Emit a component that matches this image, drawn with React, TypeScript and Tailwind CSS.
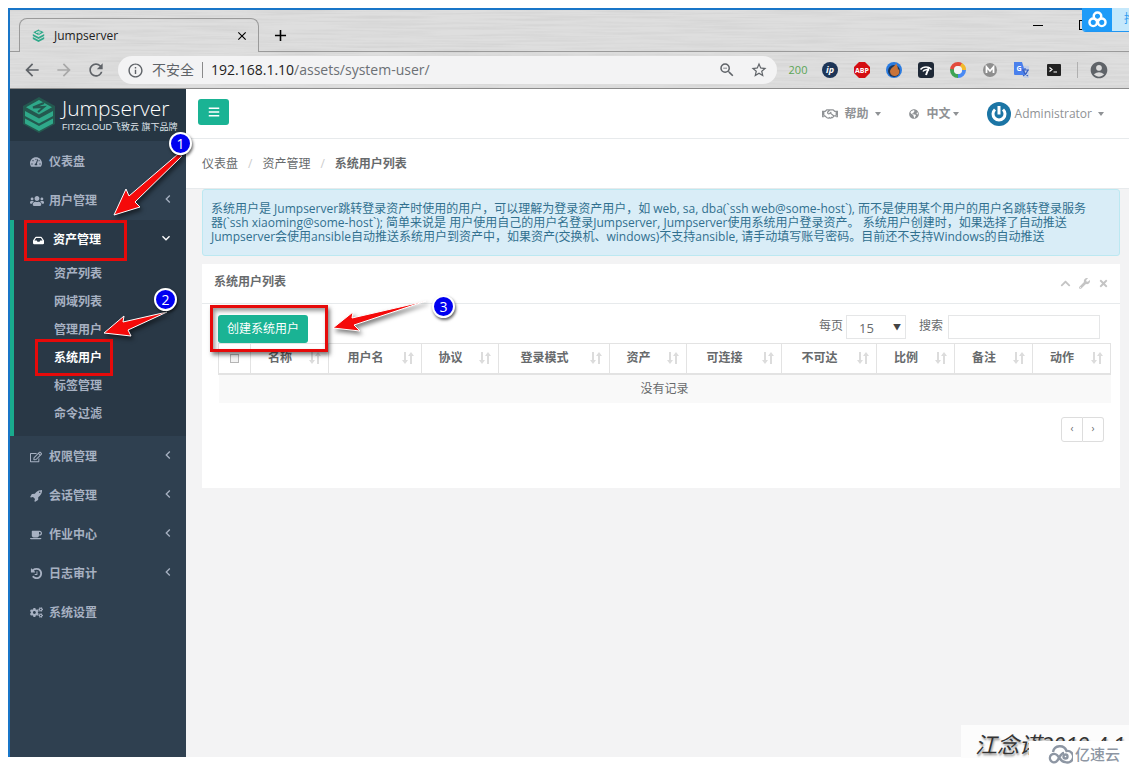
import type { ReactNode } from "react";
import {
  FaBars,
  FaChevronUp,
  FaCoffee,
  FaCogs,
  FaGlobeAmericas,
  FaInbox,
  FaRegEdit,
  FaRegHandshake,
  FaTachometerAlt,
  FaTimes,
  FaUsers,
  FaWrench,
} from "react-icons/fa";
import {
  MdAccountCircle,
  MdAdd,
  MdArrowBack,
  MdArrowForward,
  MdChevronLeft,
  MdClose,
  MdExpandMore,
  MdInfoOutline,
  MdRefresh,
  MdStarBorder,
  MdZoomOut,
} from "react-icons/md";

interface MenuItem {
  label: string;
  icon: ReactNode;
  arrow?: boolean;
}

function RocketIcon() {
  return (
    <svg viewBox="0 0 1792 1792" className="size-[13px]" fill="currentColor" aria-hidden="true">
      <path d="M1440 448q0-40-28-68t-68-28-68 28-28 68 28 68 68 28 68-28 28-68zm224-288q0 249-75.500 430.500t-253.500 360.500q-81 80-195 176l-20 379q-2 16-16 26l-384 224q-7 4-16 4-12 0-23-9l-64-64q-13-14-8-32l85-276-281-281-276 85q-3 1-9 1-14 0-23-9l-64-64q-17-19-5-39l224-384q10-14 26-16l379-20q96-114 176-195 188-187 358-258t431-71q14 0 24 9.500t10 22.500z" />
    </svg>
  );
}

function HistoryIcon() {
  return (
    <svg viewBox="0 0 1792 1792" className="size-[13px]" fill="currentColor" aria-hidden="true">
      <path d="M1664 896q0 156-61 298t-164 245-245 164-298 61q-172 0-327-72.500t-264-204.500q-7-10-6.500-22.500t8.500-20.500l137-138q10-9 25-9 16 2 23 12 73 95 179 147t225 52q104 0 198.500-40.500t163.500-109.500 109.500-163.500 40.500-198.500-40.500-198.500-109.500-163.500-163.500-109.500-198.500-40.500q-98 0-188 35.500t-160 101.500l137 138q31 30 14 69-17 40-59 40h-448q-26 0-45-19t-19-45v-448q0-42 40-59 39-17 69 14l130 129q107-101 244.500-156.500t284.500-55.500q156 0 298 61t245 164 164 245 61 298zm-640-288v448q0 14-9 23t-23 9h-320q-14 0-23-9t-9-23v-64q0-14 9-23t23-9h224v-352q0-14 9-23t23-9h64q14 0 23 9t9 23z" />
    </svg>
  );
}

const topMenu: MenuItem[] = [
  { label: "仪表盘", icon: <FaTachometerAlt /> },
  { label: "用户管理", icon: <FaUsers className="size-[14px]" />, arrow: true },
];

const assetMenu = ["资产列表", "网域列表", "管理用户", "系统用户", "标签管理", "命令过滤"];

const bottomMenu: MenuItem[] = [
  { label: "权限管理", icon: <FaRegEdit />, arrow: true },
  { label: "会话管理", icon: <RocketIcon />, arrow: true },
  { label: "作业中心", icon: <FaCoffee />, arrow: true },
  { label: "日志审计", icon: <HistoryIcon />, arrow: true },
  { label: "系统设置", icon: <FaCogs className="size-[13px]" /> },
];

const columns = [
  { label: "名称", width: "w-[78px]" },
  { label: "用户名", width: "w-[93px]" },
  { label: "协议", width: "w-[77px]" },
  { label: "登录模式", width: "w-[111px]" },
  { label: "资产", width: "w-[77px]" },
  { label: "可连接", width: "w-[95px]" },
  { label: "不可达", width: "w-[95px]" },
  { label: "比例", width: "w-[78px]" },
  { label: "备注", width: "w-[78px]" },
  { label: "动作", width: "w-[78px]" },
];

function LayersLogo({ className, frame = "none" }: { className: string; frame?: string }) {
  return (
    <svg viewBox="0 0 32 36" className={className} aria-hidden="true">
      <path d="M16 0 32 9v18L16 36 0 27V9z" fill={frame} />
      <path d="M16 3 29 10.300 16 17.500 3 10.300z" fill="#2fa98a" />
      <path d="M2 14 16 21.500 30 14v5L16 26.500 2 19z" fill="#2fa98a" />
      <path d="M2 21.500 16 29l14-7.500v5L16 34 2 26.500z" fill="#2fa98a" />
      <path d="M21 6 10 10.500l11-.5-6 5" fill="none" stroke={frame === "none" ? "#d8e4e0" : "#24584f"} strokeWidth="2" />
    </svg>
  );
}

function Caret() {
  return (
    <svg viewBox="0 0 6 4" className="h-1 w-[6px]" aria-hidden="true">
      <path d="M0 0h6L3 4z" fill="currentColor" />
    </svg>
  );
}

function SortIcon() {
  return (
    <svg viewBox="0 0 12 12" className="h-3 w-3 shrink-0" fill="#dcdcdc" aria-hidden="true">
      <path d="M2 0h2v8h2L3 12 0 8h2z" />
      <path d="M8 12h2V4h2L9 0 6 4h2z" />
    </svg>
  );
}

// Brushed metal background of the browser theme
function BrushedMetal() {
  return (
    <svg className="absolute inset-0 h-full w-full" aria-hidden="true">
      <filter id="brushed">
        <feTurbulence type="fractalNoise" baseFrequency="0.012 0.45" numOctaves="3" seed="4" />
        <feColorMatrix values="0 0 0 0 0.5  0 0 0 0 0.5  0 0 0 0 0.5  0.6 0 0 0 -0.22" />
      </filter>
      <rect width="100%" height="100%" filter="url(#brushed)" />
    </svg>
  );
}

function Extensions() {
  return (
    <div className="flex items-center gap-4 text-[#5f6368]">
      <span className="w-4 text-center text-[11px] text-[#5aa455]">
        <span className="-mx-1">200</span>
      </span>
      <svg viewBox="0 0 16 16" className="size-4">
        <circle cx="8" cy="8" r="8" fill="#1d3557" />
        <text x="8" y="11" textAnchor="middle" fontSize="9" fontStyle="italic" fontWeight="700" fill="#fff">ip</text>
      </svg>
      <svg viewBox="0 0 16 16" className="size-4">
        <path d="M5 0h6l5 5v6l-5 5H5l-5-5V5z" fill="#d40d12" />
        <text x="8" y="10.500" textAnchor="middle" fontSize="7" fontWeight="700" fill="#fff">ABP</text>
      </svg>
      <svg viewBox="0 0 16 16" className="size-4">
        <circle cx="8" cy="8" r="8" fill="#2a7be0" />
        <circle cx="8" cy="9" r="6" fill="#1c3558" />
        <path d="M10 1c0 3-5 4-6 8 0 4 3 5 5 5 4 0 5-4 4-7l-1 1c0-3-1-5-2-7z" fill="#c9743a" />
      </svg>
      <svg viewBox="0 0 16 16" className="size-4">
        <rect width="16" height="16" rx="3" fill="#1f2937" />
        <path d="M2.500 7.500C5 4 11 4 13.500 7.500M5 9.500c1-2 5-2.500 6-1" fill="none" stroke="#fff" strokeWidth="1.500" />
        <path d="M11 5 8 13" stroke="#fff" strokeWidth="2" />
      </svg>
      <svg viewBox="0 0 16 16" className="size-4" fill="none" strokeWidth="4">
        <circle cx="8" cy="8" r="6" stroke="#e24a3b" strokeDasharray="12.570 25.130" transform="rotate(180 8 8)" />
        <circle cx="8" cy="8" r="6" stroke="#f2b92d" strokeDasharray="7 30.700" transform="rotate(-60 8 8)" />
        <circle cx="8" cy="8" r="6" stroke="#4a8af4" strokeDasharray="10 27.700" transform="rotate(0 8 8)" />
        <circle cx="8" cy="8" r="6" stroke="#3da455" strokeDasharray="10 27.700" transform="rotate(90 8 8)" />
        <circle cx="8" cy="8" r="4" fill="#f3f3f3" strokeWidth="0" />
      </svg>
      <svg viewBox="0 0 16 16" className="size-4">
        <circle cx="8" cy="8" r="7" fill="#8e8e8e" />
        <path d="M4.500 11V5L8 9l3.500-4v6" fill="none" stroke="#fff" strokeWidth="1.800" />
      </svg>
      <svg viewBox="0 0 16 16" className="size-4">
        <path d="M6 4h9v12h-5z" fill="#c4cfe6" />
        <path d="M0 0h8l4 13H1a1 1 0 0 1-1-1z" fill="#4a80ec" />
        <path d="M8 8h7M11 6v2M9 8c1 3 3 5 5 6M14 8c-1 3-3 5-5 6" fill="none" stroke="#3b62c0" strokeWidth="1.200" />
        <text x="5" y="9" textAnchor="middle" fontSize="7" fontWeight="700" fill="#fff">G</text>
      </svg>
      <svg viewBox="0 0 16 16" className="size-4">
        <rect x="1" y="2" width="14" height="12" rx="1" fill="#222" />
        <path d="m3.500 5.500 2.500 2-2.500 2M7.500 10h3.500" fill="none" stroke="#fff" strokeWidth="1.200" />
      </svg>
      <span className="-mx-px h-4 w-px bg-[#b0b0b0]" />
      <MdAccountCircle className="-ml-1 size-5" />
    </div>
  );
}

function BrowserChrome() {
  return (
    <header className="relative border-b border-[#8c8c8c] bg-[#dedede]">
      <BrushedMetal />
      <div className="relative flex h-[42px] items-end">
        <div className="h-full w-[9px] shrink-0 border-b border-[#9a9a9a]" />
        <div className="flex h-[34px] w-[240px] items-center rounded-t-lg border border-b-0 border-[#9a9a9a] pr-[9px] pl-3">
          <LayersLogo className="h-[15px] w-[13px]" />
          <span className="flex-1 pl-[9px] text-xs text-[#222]">Jumpserver</span>
          <button type="button" aria-label="关闭标签页" className="text-black">
            <MdClose className="size-[14px]" />
          </button>
        </div>
        <div className="flex h-full flex-1 items-center border-b border-[#9a9a9a] pt-[9px] pl-3">
          <button type="button" aria-label="新标签页" className="text-black">
            <MdAdd className="size-[19px]" />
          </button>
          <button type="button" aria-label="最小化" className="mb-5 ml-auto mr-[36px] h-px w-[10px] bg-black" />
          <button type="button" aria-label="最大化" className="mb-5 mr-10 size-[10px] border border-black" />
        </div>
      </div>
      <div className="relative flex h-[36px] items-center pr-5 pl-3 text-[#5f6368]">
        <div className="flex gap-3">
          <button type="button" aria-label="后退"><MdArrowBack className="size-5" /></button>
          <button type="button" aria-label="前进" className="text-[#a8a8a8]"><MdArrowForward className="size-5" /></button>
          <button type="button" aria-label="刷新"><MdRefresh className="size-5" /></button>
        </div>
        <div className="mr-[13px] ml-3 flex h-7 flex-1 items-center rounded-full bg-[#f3f3f4] px-[9px]">
          <MdInfoOutline className="size-[17px]" />
          <span className="pl-2 text-sm">不安全</span>
          <span className="mx-2 h-4 w-px bg-[#8a8a8a]" />
          <span className="flex-1 text-sm text-[#6c7075]">
            <span className="text-[#222]">192.168.1.10</span>/assets/system-user/
          </span>
          <MdZoomOut className="mr-[14px] size-[18px]" />
          <MdStarBorder className="size-[18px]" />
        </div>
        <Extensions />
      </div>
      {/* cloud upload widget that floats over the window buttons */}
      <div className="absolute -top-[2px] right-0 flex h-6 w-[47px] overflow-hidden rounded-bl border-b border-[#2196f3] bg-[#c5e8fb]">
        <span className="flex w-[30px] shrink-0 items-center justify-center bg-[#1e9bf8]">
          <svg viewBox="0 0 20 18" className="h-[17px] w-[19px]" fill="none" stroke="#fff" strokeWidth="2.600">
            <circle cx="10" cy="5.500" r="4" />
            <circle cx="5.500" cy="12" r="4" />
            <circle cx="14.500" cy="12" r="4" />
          </svg>
        </span>
        <span className="pt-[3px] pl-3 text-xs whitespace-nowrap text-[#2f9df0]">拖</span>
      </div>
    </header>
  );
}

function SideItem({ item }: { item: MenuItem }) {
  return (
    <li>
      <a href="#" className="flex h-[39px] items-center pr-[10px] pl-5">
        <span className="w-[19px]">{item.icon}</span>
        <span className="flex-1">{item.label}</span>
        {item.arrow && <MdChevronLeft className="mb-1 size-4" />}
      </a>
    </li>
  );
}

function Sidebar() {
  return (
    <nav className="w-[176px] shrink-0 bg-[#2f4050] text-xs font-semibold text-[#a7b1c2]">
      <div className="flex h-[52px] items-center bg-[#263643] pl-[13px]">
        <LayersLogo className="h-[38px] w-8" frame="#24584f" />
        <div className="pl-[7px] font-normal text-white">
          <div className="text-[21px] leading-[24px] font-light">Jumpserver</div>
          <div className="font-['Liberation_Sans','Noto_Sans_CJK_SC',sans-serif] text-[9px] leading-[14px] whitespace-nowrap text-[#dfe4ea]">
            FIT2CLOUD飞致云 旗下品牌
          </div>
        </div>
      </div>
      <ul className="pt-px">
        {topMenu.map((item) => (
          <SideItem key={item.label} item={item} />
        ))}
        <li className="border-l-4 border-[#19aa8d] bg-[#293846] pb-2">
          <a href="#" className="flex h-10 items-center pr-3 pl-[19px] text-white">
            <FaInbox className="mr-[9px] size-[11px]" />
            <span className="flex-1">资产管理</span>
            <MdExpandMore className="mb-1 size-4" />
          </a>
          <ul>
            {assetMenu.map((label) => (
              <li key={label}>
                <a
                  href="#"
                  className={
                    label === "系统用户"
                      ? "flex h-7 items-center pl-10 text-white"
                      : "flex h-7 items-center pl-10"
                  }
                >
                  {label}
                </a>
              </li>
            ))}
          </ul>
        </li>
        <li>
          <ul className="pt-px">
            {bottomMenu.map((item) => (
              <SideItem key={item.label} item={item} />
            ))}
          </ul>
        </li>
      </ul>
    </nav>
  );
}

function TopBar() {
  return (
    <div className="flex h-[50px] items-center border-b border-[#e7eaec] bg-white pr-[25px] pl-3 text-[#8f9295]">
      <button
        type="button"
        aria-label="菜单"
        className="mb-[3px] flex h-[26px] w-[31px] items-center justify-center rounded-[3px] bg-[#1ab394] text-white"
      >
        <FaBars className="size-3" />
      </button>
      <div className="ml-auto flex items-center text-xs font-semibold">
        <a href="#" className="flex items-center">
          <FaRegHandshake className="mr-[7px] size-4" />
          帮助
          <span className="ml-[6px]"><Caret /></span>
        </a>
        <a href="#" className="ml-7 flex items-center">
          <FaGlobeAmericas className="mr-2 size-[10px]" />
          中文
          <span className="ml-[2px]"><Caret /></span>
        </a>
        <a href="#" className="ml-7 flex items-center font-normal">
          <svg viewBox="0 0 24 24" className="mr-1 size-6" fill="none">
            <circle cx="12" cy="12" r="12" fill="#1b75a5" />
            <path d="M8 7.500a6 6 0 1 0 8 0" stroke="#fff" strokeWidth="3" />
            <path d="M12 4v8.500" stroke="#fff" strokeWidth="3" />
          </svg>
          Administrator
          <span className="ml-[6px]"><Caret /></span>
        </a>
      </div>
    </div>
  );
}

function UserPanel() {
  return (
    <section className="mt-2 bg-white pb-[46px]">
      <div className="flex h-10 items-center justify-between border-b border-[#e7eaec] pr-[11px] pl-3">
        <h5 className="pb-1 font-semibold">系统用户列表</h5>
        <div className="flex gap-2 text-[#c4c4c4]">
          <button type="button" aria-label="折叠"><FaChevronUp className="size-[11px]" /></button>
          <button type="button" aria-label="设置"><FaWrench className="size-[11px]" /></button>
          <button type="button" aria-label="关闭"><FaTimes className="size-[11px]" /></button>
        </div>
      </div>
      <div className="pt-[11px] pr-[10px] pl-4">
        <div className="flex items-start justify-between">
          <button type="button" className="h-7 rounded-[3px] bg-[#1ab394] px-[9px] text-white">
            创建系统用户
          </button>
          <div className="flex pr-[10px]">
            <label htmlFor="page-size" className="pt-[3px] pr-[3px]">每页</label>
            <div className="relative mr-px">
              <select
                id="page-size"
                className="h-6 w-[60px] appearance-none border border-[#e5e6e7] bg-white pt-[3px] pl-3 text-[13px]"
              >
                <option>15</option>
                <option>25</option>
                <option>50</option>
              </select>
              <span className="pointer-events-none absolute top-[6px] right-[5px] text-[8px] leading-3 text-[#444]">▼</span>
            </div>
            <label htmlFor="search" className="pt-[3px] pr-[5px] pl-3">搜索</label>
            <input id="search" type="search" className="h-6 w-[152px] border border-[#e5e6e7] px-2" />
          </div>
        </div>
        <table className="w-full table-fixed border-collapse">
          <thead>
            <tr className="h-[30px]">
              <th className="w-8 border border-b-2 border-[#e3e3e3]">
                <input type="checkbox" aria-label="全选" className="mx-auto block size-[9px] appearance-none border border-[#b5b5b5] bg-[#f3f3f3]" />
              </th>
              {columns.map((column) => (
                <th key={column.label} className={`${column.width} border border-b-2 border-[#e3e3e3] font-semibold`}>
                  <div className="flex items-center pr-[7px]">
                    <span className="flex-1">{column.label}</span>
                    <SortIcon />
                  </div>
                </th>
              ))}
            </tr>
          </thead>
          <tbody>
            <tr className="h-[29px] bg-[#f9f9f9]">
              <td colSpan={11} className="text-center">没有记录</td>
            </tr>
          </tbody>
        </table>
        <div className="mt-[14px] mr-[6px] flex justify-end text-[10px]">
          <button type="button" aria-label="上一页" className="h-[25px] w-[22px] rounded-l-[3px] border border-[#ddd]">‹</button>
          <button type="button" aria-label="下一页" className="h-[25px] w-[21px] rounded-r-[3px] border border-l-0 border-[#ddd]">›</button>
        </div>
      </div>
    </section>
  );
}

function StepBadge({ step, className }: { step: number; className: string }) {
  return (
    <span
      className={`absolute flex size-[23px] items-center justify-center rounded-full border-2 border-white bg-[#0000f0] text-sm text-white shadow-[1px_2px_3px_rgba(0,0,0,0.6)] ${className}`}
    >
      {step}
    </span>
  );
}

// Red frames, arrows and numbered steps drawn over the window
function Annotations() {
  return (
    <div className="pointer-events-none absolute inset-0">
      <div className="absolute top-[220px] left-[24px] h-[41px] w-[103px] border-3 border-[#e60a0a]" />
      <div className="absolute top-[339px] left-[35px] h-[37px] w-[78px] border-3 border-[#e60a0a]" />
      <div className="absolute top-[305px] left-[210px] h-[47px] w-[118px] border-3 border-[#e60a0a] shadow-[2px_3px_4px_rgba(0,0,0,0.5),inset_2px_3px_4px_rgba(0,0,0,0.4)]" />
      <svg
        viewBox="0 0 440 380"
        className="absolute top-0 left-0 h-[380px] w-[440px] drop-shadow-[2px_3px_2px_rgba(0,0,0,0.5)]"
        fill="#f50a0a"
        stroke="#fff"
        strokeWidth="1"
      >
        <path d="M114 215 126 189l3 7 49-42 4 2-47 46 5 5z" />
        <path d="m104 333 20-17-1 6 44-10-39 18 3 6z" />
        <path d="m333 328 20-16-1 6 74-17-72 24 6 6z" />
      </svg>
      <StepBadge step={1} className="top-[132px] left-[169px]" />
      <StepBadge step={2} className="top-[288px] left-[154px]" />
      <StepBadge step={3} className="top-[295px] left-[432px]" />
    </div>
  );
}

function Watermark() {
  return (
    <>
      <div className="absolute right-[9px] bottom-2 h-[33px] w-[168px] bg-[#fcfcfc] pt-[6px] pl-[14px] text-[22px] leading-[27px] whitespace-nowrap text-[#333] italic text-shadow-[1px_2px_2px_rgba(0,0,0,0.4)]">
        江念诺2019.4.1
      </div>
      <div className="absolute right-0 bottom-0 flex h-[25px] w-[109px] items-center bg-white pl-[18px] text-[15px] font-medium text-[#8d96a3]">
        <svg viewBox="0 0 26 20" className="mr-[2px] h-5 w-[26px]" fill="none" stroke="currentColor" strokeWidth="2.400">
          <path d="M6 8a7 7 0 0 1 13.500-1A5.800 5.800 0 1 1 18 18c-4 0-5-4-8-7a4.200 4.200 0 1 0-.5 6.500C12 16 13 9 17 9" />
          <circle cx="18.500" cy="12.500" r="2" />
        </svg>
        亿速云
      </div>
    </>
  );
}

export default function App() {
  return (
    <div className="relative flex min-h-screen flex-col overflow-hidden bg-white pt-2 pr-[9px] pb-[9px] pl-2 font-['Open_Sans','Noto_Sans_CJK_SC',sans-serif] text-xs text-[#676a6c]">
      <div className="flex flex-1 flex-col border-t-2 border-l-2 border-[#1976c8]">
        <BrowserChrome />
        <div className="flex flex-1">
          <Sidebar />
          <main className="min-w-0 flex-1 bg-[#f3f3f4]">
            <TopBar />
            <div className="flex h-[50px] items-center gap-[10px] border-b border-[#e7eaec] bg-white pl-4">
              <a href="#">仪表盘</a>
              <span className="text-[#ccc]">/</span>
              <a href="#">资产管理</a>
              <span className="text-[#ccc]">/</span>
              <strong className="font-semibold">系统用户列表</strong>
            </div>
            <div className="pr-[9px] pl-4">
              <div className="rounded-[3px] border border-[#bce8f1] bg-[#d9edf7] pt-3 pb-[11px] pl-2 leading-[14px] text-[#31708f]">
                系统用户是 Jumpserver跳转登录资产时使用的用户，可以理解为登录资产用户，如 web, sa, dba(`ssh web@some-host`), 而不是使用某个用户的用户名跳转登录服务
                <br />
                器(`ssh xiaoming@some-host`); 简单来说是 用户使用自己的用户名登录Jumpserver, Jumpserver使用系统用户登录资产。 系统用户创建时，如果选择了自动推送
                <br />
                Jumpserver会使用ansible自动推送系统用户到资产中，如果资产(交换机、windows)不支持ansible, 请手动填写账号密码。目前还不支持Windows的自动推送
              </div>
              <UserPanel />
            </div>
          </main>
        </div>
      </div>
      <Annotations />
      <Watermark />
    </div>
  );
}
